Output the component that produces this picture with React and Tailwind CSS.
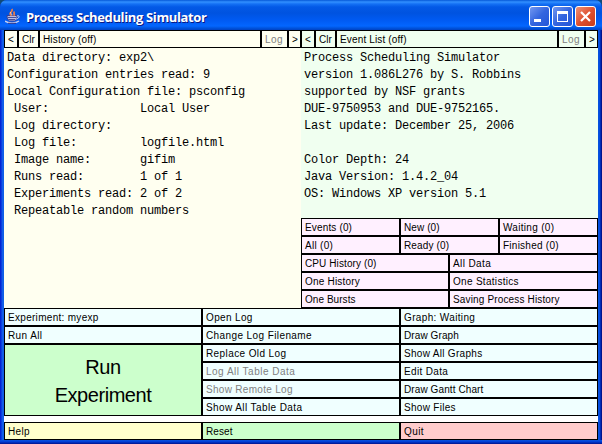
const leftText = `Data directory: exp2\\
Configuration entries read: 9
Local Configuration file: psconfig
 User:             Local User
 Log directory:
 Log file:         logfile.html
 Image name:       gifim
 Runs read:        1 of 1
 Experiments read: 2 of 2
 Repeatable random numbers`;

const rightText = `Process Scheduling Simulator
version 1.086L276 by S. Robbins
supported by NSF grants
DUE-9750953 and DUE-9752165.
Last update: December 25, 2006

Color Depth: 24
Java Version: 1.4.2_04
OS: Windows XP version 5.1`;

function Cell({ children, className = '' }) {
  return (
    <button className={`block h-[18px] overflow-hidden whitespace-nowrap border border-black pl-[3px] text-left text-[10px] leading-[18px] ${className}`}>
      {children}
    </button>
  );
}

function Bar({ children, bg }) {
  return (
    <div className={`flex h-[18px] ${bg}`}>
      <Cell className="w-[14px] shrink-0">&lt;</Cell>
      <Cell className="w-[21px] shrink-0">Clr</Cell>
      <Cell className="w-[222px] shrink-0 tracking-[0.15px]">{children}</Cell>
      <Cell className="w-[27px] shrink-0 tracking-[0.4px] text-[#808080]">Log</Cell>
      <Cell className="w-[13px] shrink-0">&gt;</Cell>
    </div>
  );
}

function JavaCup() {
  return (
    <svg className="ml-[5px] mt-[8px] h-4 w-4 shrink-0" viewBox="0 0 16 16" fill="none">
      <path d="M2 7.500h10c0 3-1 5-2 5.500H4.500C3 12 2 10 2 7.500Z" fill="#b9bfe4" stroke="#3b3f8e" />
      <path d="M3 9.500h8M4 11.500h6" stroke="#484e9a" />
      <path d="M12 8c3-1 3 2-.8 3" stroke="#d3d8f4" />
      <path d="M6.500 7.500C2.500 5 8.500 3.800 7 .8M8.500 7.500c2.500-1.500-1-2 1-4" stroke="#f07f48" strokeWidth="1.700" />
      <path d="M5.500 4C5 5.500 7 5.500 7 7.500" stroke="#ffd8bd" strokeWidth=".9" />
      <path d="M0 13c3 2.500 11 2.500 14 0" stroke="#c5cdf0" strokeWidth="1.400" />
      <path d="M3 15.300h8" stroke="#2b3188" />
    </svg>
  );
}

function WindowButtons() {
  return (
    <div className="flex gap-[2px] pt-[6px]">
      <button className="relative h-[21px] w-[21px] rounded-[3px] border border-white bg-linear-to-br from-[#7397f0] via-[#3465df] to-[#2355d8]">
        <span className="absolute bottom-[4px] left-[4px] h-[3px] w-[7px] bg-white" />
      </button>
      <button className="relative h-[21px] w-[21px] rounded-[3px] border border-white bg-linear-to-br from-[#7397f0] via-[#3465df] to-[#2355d8]">
        <span className="absolute left-[4px] top-[4px] h-[11px] w-[11px] border border-t-[3px] border-white" />
      </button>
      <button className="h-[21px] w-[21px] rounded-[3px] border border-white bg-linear-to-br from-[#ee9075] via-[#df5030] to-[#c83c18]">
        <svg className="h-[19px] w-[19px]" viewBox="0 0 19 19"><path d="m5 5 9 9m0-9-9 9" stroke="white" strokeWidth="2.200" /></svg>
      </button>
    </div>
  );
}

export default function App() {
  return (
    <div className="h-[444px] w-[602px] overflow-hidden bg-[#104a78]">
      <div className="flex h-[444px] w-[602px] flex-col overflow-hidden rounded-t-[7px] bg-[linear-gradient(90deg,#0019cf_0px,#0831d9_1px,#166aee_3px,#0855dd_4px,#0855dd_598px,#0046e0_600px,#00138c_601px)] font-['Liberation_Sans',sans-serif] text-black">
        <header className="flex h-[30px] shrink-0 bg-[linear-gradient(180deg,#0558d8_0px,#3290ff_2px,#1470f4_4px,#0359e6_7px,#0053e0_13px,#005af2_20px,#0366ff_26px,#0054de_28px,#0042c4_30px)]">
          <JavaCup />
          <h1 className="ml-[5px] flex-1 whitespace-nowrap pt-[7px] font-['Open_Sans',sans-serif] text-[13px] font-bold leading-[20px] tracking-[-0.36px] text-white [text-shadow:1px_1px_0_#0a1883]">
            Process Scheduling Simulator
          </h1>
          <div className="pr-[6px]"><WindowButtons /></div>
        </header>
        <main className="ml-[4px] flex h-[410px] w-[594px] flex-col bg-white">
          <div className="flex h-[278px]">
            <section className="w-[297px] bg-[#fffff0]">
              <Bar bg="bg-[#fffff0]">History (off)</Bar>
              <pre className="pl-[3px] pt-[2px] font-['Liberation_Mono',monospace] text-[12px] leading-[17px] tracking-[-0.2px]">{leftText}</pre>
            </section>
            <section className="flex w-[297px] flex-col bg-[#f0fff0]">
              <Bar bg="bg-[#f0fff0]">Event List (off)</Bar>
              <pre className="h-[170px] pl-[3px] pt-[2px] font-['Liberation_Mono',monospace] text-[12px] leading-[17px] tracking-[-0.2px]">{rightText}</pre>
              <div className="grid grid-cols-3 bg-[#fff0ff]">
                <Cell className="tracking-[0.15px]">Events (0)</Cell>
                <Cell className="tracking-[0.1px]">New (0)</Cell>
                <Cell className="tracking-[0.3px]">Waiting (0)</Cell>
                <Cell className="tracking-[0.3px]">All (0)</Cell>
                <Cell className="tracking-[0.15px]">Ready (0)</Cell>
                <Cell className="tracking-[0.25px]">Finished (0)</Cell>
              </div>
              <div className="grid grid-cols-[148px_149px] bg-[#fff0ff]">
                <Cell className="tracking-[0.1px]">CPU History (0)</Cell>
                <Cell className="tracking-[0.4px]">All Data</Cell>
                <Cell className="tracking-[0.2px]">One History</Cell>
                <Cell className="tracking-[0.3px]">One Statistics</Cell>
                <Cell className="tracking-[0.05px]">One Bursts</Cell>
                <Cell className="tracking-[0.15px]">Saving Process History</Cell>
              </div>
            </section>
          </div>
          <div className="grid h-[108px] grid-cols-3 bg-[#f0ffff]">
            <div className="flex flex-col">
              <Cell className="tracking-[0.3px]">Experiment: myexp</Cell>
              <Cell className="tracking-[0.4px]">Run All</Cell>
              <button className="flex h-[72px] flex-col items-center border border-black bg-[#ccffcc] pt-[8px] text-[20px] leading-[28px] tracking-[-0.45px]">
                <span>Run</span>
                <span>Experiment</span>
              </button>
            </div>
            <div className="flex flex-col">
              <Cell className="tracking-[0.35px]">Open Log</Cell>
              <Cell className="tracking-[0.4px]">Change Log Filename</Cell>
              <Cell className="tracking-[0.4px]">Replace Old Log</Cell>
              <Cell className="tracking-[0.5px] text-[#808080]">Log All Table Data</Cell>
              <Cell className="tracking-[0.3px] text-[#808080]">Show Remote Log</Cell>
              <Cell className="tracking-[0.4px]">Show All Table Data</Cell>
            </div>
            <div className="flex flex-col">
              <Cell className="tracking-[0.35px]">Graph: Waiting</Cell>
              <Cell className="tracking-[0.1px]">Draw Graph</Cell>
              <Cell className="tracking-[0.3px]">Show All Graphs</Cell>
              <Cell className="tracking-[0.35px]">Edit Data</Cell>
              <Cell className="tracking-[0.1px]">Draw Gantt Chart</Cell>
              <Cell className="tracking-[0.3px]">Show Files</Cell>
            </div>
          </div>
          <div className="mt-[6px] grid grid-cols-3">
            <Cell className="bg-[#ffffcc] tracking-[0.3px]">Help</Cell>
            <Cell className="bg-[#ccffcc] tracking-[0.1px]">Reset</Cell>
            <Cell className="bg-[#ffcccc] tracking-[0.4px]">Quit</Cell>
          </div>
        </main>
        <div className="h-[4px] bg-[linear-gradient(180deg,#0855dd,#0040d8_40%,#00138c)]" />
      </div>
    </div>
  );
}
